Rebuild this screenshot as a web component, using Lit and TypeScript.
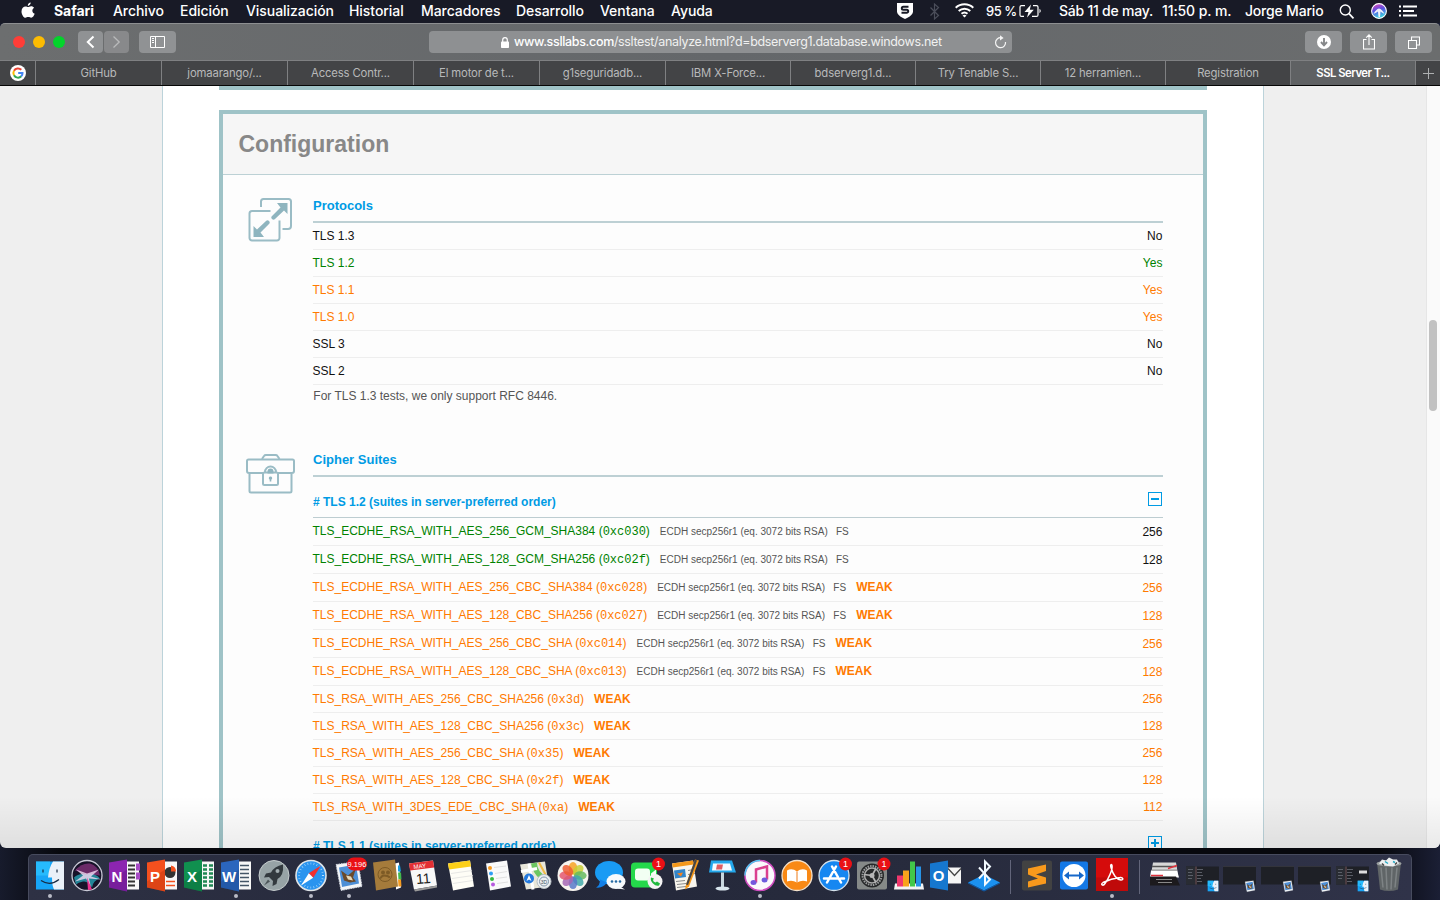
import { LitElement, html, svg, css } from "lit";
import { customElement } from "lit/decorators.js";
import { classMap } from "lit/directives/class-map.js";

type Tone = "plain" | "good" | "warn";

const menus = [
  { label: "Safari", w: 59, cls: "b" },
  { label: "Archivo", w: 67 },
  { label: "Edición", w: 66 },
  { label: "Visualización", w: 103 },
  { label: "Historial", w: 72 },
  { label: "Marcadores", w: 95 },
  { label: "Desarrollo", w: 84 },
  { label: "Ventana", w: 71 },
  { label: "Ayuda", w: 60 },
];

const tabs = [
  { label: "GitHub", w: 126 },
  { label: "jomaarango/...", w: 126 },
  { label: "Access Contr...", w: 126 },
  { label: "El motor de t...", w: 126 },
  { label: "g1seguridadb...", w: 126 },
  { label: "IBM X-Force...", w: 125 },
  { label: "bdserverg1.d...", w: 125 },
  { label: "Try Tenable S...", w: 125 },
  { label: "12 herramien...", w: 125 },
  { label: "Registration", w: 125 },
  { label: "SSL Server T...", w: 125, active: true },
];

const protocols: { name: string; value: string; tone: Tone }[] = [
  { name: "TLS 1.3", value: "No", tone: "plain" },
  { name: "TLS 1.2", value: "Yes", tone: "good" },
  { name: "TLS 1.1", value: "Yes", tone: "warn" },
  { name: "TLS 1.0", value: "Yes", tone: "warn" },
  { name: "SSL 3", value: "No", tone: "plain" },
  { name: "SSL 2", value: "No", tone: "plain" },
];

const suites = [
  { name: "TLS_ECDHE_RSA_WITH_AES_256_GCM_SHA384", code: "0xc030", ecdh: true, weak: false, bits: 256 },
  { name: "TLS_ECDHE_RSA_WITH_AES_128_GCM_SHA256", code: "0xc02f", ecdh: true, weak: false, bits: 128 },
  { name: "TLS_ECDHE_RSA_WITH_AES_256_CBC_SHA384", code: "0xc028", ecdh: true, weak: true, bits: 256 },
  { name: "TLS_ECDHE_RSA_WITH_AES_128_CBC_SHA256", code: "0xc027", ecdh: true, weak: true, bits: 128 },
  { name: "TLS_ECDHE_RSA_WITH_AES_256_CBC_SHA", code: "0xc014", ecdh: true, weak: true, bits: 256 },
  { name: "TLS_ECDHE_RSA_WITH_AES_128_CBC_SHA", code: "0xc013", ecdh: true, weak: true, bits: 128 },
  { name: "TLS_RSA_WITH_AES_256_CBC_SHA256", code: "0x3d", ecdh: false, weak: true, bits: 256 },
  { name: "TLS_RSA_WITH_AES_128_CBC_SHA256", code: "0x3c", ecdh: false, weak: true, bits: 128 },
  { name: "TLS_RSA_WITH_AES_256_CBC_SHA", code: "0x35", ecdh: false, weak: true, bits: 256 },
  { name: "TLS_RSA_WITH_AES_128_CBC_SHA", code: "0x2f", ecdh: false, weak: true, bits: 128 },
  { name: "TLS_RSA_WITH_3DES_EDE_CBC_SHA", code: "0xa", ecdh: false, weak: true, bits: 112 },
];

@customElement("mac-menubar")
class MacMenubar extends LitElement {
  static styles = css`
    :host { display: flex; height: 23px; background: #181a26; color: #fff; font: 500 14px/22px Inter, sans-serif; white-space: nowrap; }
    .apple { width: 33px; padding-left: 21px; }
    .b { font-weight: 700; }
    .item { letter-spacing: -0.06px; }
    .fill { flex: 1; }
    .status { display: flex; width: 543px; }
    svg { display: block; }
    .s { width: 33px; }
    .bt { width: 25px; }
    .wf { width: 31px; }
    .pct { width: 33px; font-size: 13px; letter-spacing: -0.5px; }
    .bat { width: 40px; }
    .date { width: 103px; letter-spacing: -0.23px; }
    .time { width: 83px; letter-spacing: -0.1px; }
    .user { width: 94px; letter-spacing: -0.2px; }
    .find { width: 32px; }
    .siri { width: 28px; }
  `;
  render() {
    return html`
      <div class="apple">
        <svg width="14" height="23" viewBox="0 0 14 23"><path fill="#fff" d="M9.700 2.600c.1 1.700-1.300 3.300-2.900 3.300-.1-1.600 1.300-3.200 2.900-3.300zM7 7c.7 0 1.700-.8 3.100-.8 1.300 0 2.300.6 3 1.500-2.600 1.600-2.200 5 .6 6.100-.6 1.700-2 4-3.500 4-1.100 0-1.500-.7-2.900-.7s-1.900.7-2.900.7C2.700 17.800.5 14.400.5 11.400c0-3.200 2-5 4-5C5.700 6.400 6.500 7 7 7z"/></svg>
      </div>
      ${menus.map((m) => html`<span class=${"item " + (m.cls ?? "")} style=${`width:${m.w}px`}>${m.label}</span>`)}
      <div class="fill"></div>
      <div class="status">
        <svg class="s" width="33" height="23" viewBox="0 0 33 23"><path d="M0 3h16v8.500c0 3-4 6-8 7.500-4-1.500-8-4.500-8-7.500z" fill="#fff"/><path d="M11.500 6.800H6.300a1.400 1.400 0 0 0 0 3h3.400a1.500 1.500 0 0 1 0 3H4.500" fill="none" stroke="#181a26" stroke-width="2"/></svg>
        <svg class="bt" width="25" height="23" viewBox="0 0 25 23"><path d="M.5 7.500l8 8-4 3.500V4l4 3.500-8 8" fill="none" stroke="#4b4e5a" stroke-width="1.200"/></svg>
        <svg class="wf" width="31" height="23" viewBox="0 0 31 23"><g fill="none" stroke="#fff" stroke-width="2"><path d="M.7 7.700a13 13 0 0 1 17.600 0"/><path d="M3.700 10.900a8.600 8.600 0 0 1 11.600 0"/><path d="M6.500 13.800a4.600 4.600 0 0 1 6 0"/></g><path d="M7.500 15.500q2-1.500 4 0l-2 2z" fill="#fff"/></svg>
        <span class="pct">95 %</span>
        <svg class="bat" width="40" height="23" viewBox="0 0 40 23"><g fill="none" stroke="#fff" stroke-width="1.200"><path d="M6 5.600H2.500a1.500 1.500 0 0 0-1.500 1.500v7.800a1.500 1.500 0 0 0 1.500 1.500H5M14 5.600h3.500a1.500 1.500 0 0 1 1.500 1.500v7.800a1.500 1.500 0 0 1-1.500 1.500H13"/></g><path d="M20.500 8.800q2.500 2.200 0 4.400zM12 4.500L5.500 12h4L8 17.500l6.800-7.700h-4z" fill="#fff"/></svg>
        <span class="date">Sáb 11 de may.</span>
        <span class="time">11:50 p. m.</span>
        <span class="user">Jorge Mario</span>
        <svg class="find" width="32" height="23" viewBox="0 0 32 23"><circle cx="6.300" cy="10" r="5" fill="none" stroke="#fff" stroke-width="1.400"/><path d="M10 13.700l4.500 4.600" stroke="#fff" stroke-width="1.700"/></svg>
        <svg class="siri" width="28" height="23" viewBox="0 0 28 23"><defs><linearGradient id="sg" x2=".3" y2="1"><stop offset="0" stop-color="#f03fb0"/><stop offset=".5" stop-color="#5a51e0"/><stop offset="1" stop-color="#3bd0e0"/></linearGradient></defs><circle cx="8" cy="11" r="7.400" fill="url(#sg)" stroke="#fff" stroke-width="1.100"/><path d="M2.500 14Q5 9 8 8.500q3 .5 5.500 5.500Q10 12 9.500 11.500L9 17H7.500l-.5-5.500Q6 12 2.500 14z" fill="#fff" opacity=".9"/></svg>
        <svg width="20" height="23" viewBox="0 0 20 23"><path d="M0 6.500h2M4 6.500h14M0 11h2M4 11h11M0 15.500h2M4 15.500h14" stroke="#fff" stroke-width="2"/></svg>
      </div>
    `;
  }
}

@customElement("safari-chrome")
class SafariChrome extends LitElement {
  static styles = css`
    :host { display: block; font-family: Inter, sans-serif; white-space: nowrap; }
    svg { display: block; }
    .bar { display: flex; align-items: center; box-sizing: border-box; height: 37px; padding: 0 8px 0 13px; border-top: 1px solid #8d8f91; background: linear-gradient(90deg, #6c6e6f, #64676a 50%, #6b6d6e); border-radius: 5px 5px 0 0; }
    .lights { display: flex; gap: 8px; width: 65px; }
    .light { flex: none; width: 12px; height: 12px; border-radius: 50%; background: #ff3d37; }
    .light.amber { background: #fdbc02; }
    .light.green { background: #03d42b; }
    .btn { display: flex; align-items: center; justify-content: center; width: 37px; height: 22px; border-radius: 4px; background: #909294; }
    .nav { width: 25px; margin-right: 1px; }
    .nav.off { margin-right: 10px; background: #88898b; }
    .url { display: flex; align-items: center; box-sizing: border-box; width: 583px; height: 22px; margin-left: 253px; padding: 0 5px 0 72px; border-radius: 4px; background: #8e9092; color: #f0f0f0; font-size: 12.500px; line-height: 22px; letter-spacing: -0.335px; }
    .addr { flex: 1; padding-left: 5px; }
    .host { color: #fff; font-weight: 500; }
    .right { display: flex; gap: 8px; margin-left: auto; }
    .tabs { display: flex; height: 25px; box-sizing: border-box; background: #434446; border-top: 1px solid #7f8082; color: #b8b9ba; font-size: 11.300px; line-height: 24px; }
    .pin { display: flex; align-items: center; justify-content: center; width: 35px; }
    .tab { box-sizing: border-box; border-left: 1px solid #7f8082; text-align: center; letter-spacing: -0.15px; }
    .tab.active { background: #5f6163; color: #fff; font-weight: 600; letter-spacing: -0.5px; }
    .plus { display: flex; flex: 1; align-items: center; justify-content: center; border-left: 1px solid #7f8082; }
    .line { height: 1px; background: #060606; }
  `;
  render() {
    return html`
      <div class="bar">
        <div class="lights"><i class="light"></i><i class="light amber"></i><i class="light green"></i></div>
        <div class="btn nav"><svg width="9" height="14"><path d="M7.500 1.500L1.800 7l5.700 5.500" fill="none" stroke="#fff" stroke-width="2"/></svg></div>
        <div class="btn nav off"><svg width="9" height="14"><path d="M1.500 1.500L7.200 7l-5.700 5.500" fill="none" stroke="#b9babb" stroke-width="1.300"/></svg></div>
        <div class="btn"><svg width="15" height="12"><path d="M.5.5h14v11H.5zM5.500.5v11M2 2.500h2M2 4.500h2M2 6.500h2" fill="none" stroke="#fff"/></svg></div>
        <div class="url">
          <svg width="8" height="11"><rect y="4.500" width="8" height="6.500" rx=".8" fill="#fff"/><path d="M1.700 5V3a2.300 2.300 0 0 1 4.600 0v2" fill="none" stroke="#fff" stroke-width="1.200"/></svg>
          <span class="addr"><span class="host">www.ssllabs.com</span>/ssltest/analyze.html?d=bdserverg1.database.windows.net</span>
          <svg width="13" height="14" viewBox="0 0 13 14"><path d="M7 2.700a5 5 0 1 0 4.500 4.300" fill="none" stroke="#f4f4f4" stroke-width="1.200"/><path d="M6 .3l3.600 2.600L6 5.500z" fill="#f4f4f4"/></svg>
        </div>
        <div class="right">
          <div class="btn"><svg width="14" height="14"><circle cx="7" cy="7" r="7" fill="#fff"/><path d="M7 3v6M4 7l3 3.300L10 7" fill="none" stroke="#858789" stroke-width="1.900"/></svg></div>
          <div class="btn"><svg width="12" height="16"><path d="M3.500 5.500h-3v9.500h11V5.500h-3M6 11V1M3.200 3.700L6 .9l2.800 2.800" fill="none" stroke="#fff" stroke-width="1.100"/></svg></div>
          <div class="btn"><svg width="12" height="13"><path d="M.5 4.500h8v8h-8zM3.500 4.500v-3.500h8v8h-3" fill="none" stroke="#fff" stroke-width="1.100"/></svg></div>
        </div>
      </div>
      <div class="tabs">
        <div class="pin"><svg width="16" height="16" viewBox="0 0 16 16"><circle cx="8" cy="8" r="8" fill="#fff"/><g fill="none" stroke-width="2"><path d="M11.300 4.800A4.600 4.600 0 0 0 4 5.700" stroke="#ea4335"/><path d="M4 5.700a4.600 4.600 0 0 0 0 4.600" stroke="#fbbc05"/><path d="M4 10.300a4.600 4.600 0 0 0 7.300 1" stroke="#34a853"/><path d="M8.200 8h4.300a4.600 4.600 0 0 1-1.300 3.400" stroke="#4285f4"/></g></svg></div>
        ${tabs.map((t) => html`<div class=${classMap({ tab: true, active: !!t.active })} style=${`width:${t.w}px`}>${t.label}</div>`)}
        <div class="plus"><svg width="11" height="11"><path d="M5.500 0v11M0 5.500h11" stroke="#aeb0b1"/></svg></div>
      </div>
      <div class="line"></div>
    `;
  }
}

@customElement("ssl-report")
class SslReport extends LitElement {
  static styles = css`
    :host { display: flex; position: relative; height: 762px; overflow: hidden; background: #efefef; border-radius: 0 0 6px 6px; font: 12px/14px "Liberation Sans", Arial, sans-serif; color: #111; }
    .sheet { box-sizing: border-box; width: 1102px; margin-left: 162px; padding: 0 56px; border: solid #bcd3da; border-width: 0 1px; background: #fff; }
    .prev { height: 4px; background: #9fc3c7; }
    .box { height: 800px; margin-top: 20px; border: 4px solid #9fc3c7; background: #fdfdfd; }
    .title { box-sizing: border-box; height: 61px; padding-left: 15.500px; border-bottom: 1px solid #bcd1d5; background: #f6f6f6; color: #888; font-weight: 700; font-size: 23px; line-height: 60px; }
    .section { display: flex; padding: 0 40px 0 23px; }
    .icon { width: 67px; }
    .protocols { height: 254px; }
    .protocols .icon { padding-top: 22px; }
    .ciphers .icon { padding-top: 24px; }
    .main { flex: 1; }
    svg { display: block; }
    .h { box-sizing: border-box; height: 48px; padding-top: 23px; border-bottom: 2px solid #bdd0d4; color: #009be4; font-weight: 700; font-size: 13px; line-height: 16px; }
    .sub { display: flex; justify-content: space-between; box-sizing: border-box; height: 41px; padding: 15px 1px 0 0; border-bottom: 1px solid #bdcdd1; color: #009be4; font-weight: 700; line-height: 21px; }
    .row { display: flex; justify-content: space-between; box-sizing: border-box; height: 27px; padding: 0 0.600px 0 0; border-bottom: 1px solid #eee; line-height: 26px; white-space: pre; }
    .tall { height: 28px; }
    .tall .bits { padding-top: 1px; }
    .left { margin-left: -0.500px; }
    .good { color: #008200; }
    .warn { color: #ff7a00; }
    .bits.good { color: #111; }
    .code { font-family: "Liberation Mono", monospace; font-size: 12px; }
    .info { margin-left: 10px; color: #555; font-size: 10px; }
    .fs { margin-left: 8.300px; }
    .weak { margin-left: 10px; font-weight: 700; }
    .note { padding: 4px 0 0 0.300px; color: #555; }
    .toggle { box-sizing: border-box; display: flex; align-items: center; justify-content: center; width: 14px; height: 14px; border: 1px solid #009be4; }
    .track { width: 14px; margin-left: auto; box-sizing: border-box; padding: 234px 0 0 2px; border-left: 1px solid #e6e6e6; background: #fafafa; }
    .thumb { width: 8px; height: 91px; border-radius: 4px; background: #c1c1c1; }
    .shade { position: absolute; inset: auto 0 0 0; height: 52px; background: linear-gradient(transparent, rgba(0, 0, 0, 0.065)); }
  `;
  toggle(open: boolean) {
    return html`<span class="toggle"><svg width="8" height="8"><path d=${open ? "M0 4h8" : "M0 4h8M4 0v8"} stroke="#009be4" stroke-width="2"/></svg></span>`;
  }
  render() {
    return html`
      <div class="sheet">
        <div class="prev"></div>
        <div class="box">
          <div class="title">Configuration</div>
          <div class="section protocols">
            <div class="icon">
              <svg width="48" height="46" viewBox="246.500 197 48 46"><g fill="none" stroke="#9abcc5" stroke-width="2"><path d="M261.500 207v-5.500a2.500 2.500 0 0 1 2.500-2.500h25a2.500 2.500 0 0 1 2.500 2.500V226a3 3 0 0 1-3 3H283"/><path d="M271 211h-18.500a2.500 2.500 0 0 0-2.500 2.500V238a2.500 2.500 0 0 0 2.500 2.500h25a2.500 2.500 0 0 0 2.500-2.500v-17.500"/></g><path d="M288 203v11l-3.500-3.500-9 8.500a2 2 0 0 1-3-3l8.500-8.500-3.500-4.500zM254 237v-11l3.500 3.500 9-8.500a2 2 0 0 1 3 3l-8.500 8.500 3.500 4.500z" fill="#8fb5bf"/></svg>
            </div>
            <div class="main">
              <div class="h">Protocols</div>
              ${protocols.map((p) => html`<div class=${"row " + p.tone}><span class="left">${p.name}</span><span>${p.value}</span></div>`)}
              <div class="note">For TLS 1.3 tests, we only support RFC 8446.</div>
            </div>
          </div>
          <div class="section ciphers">
            <div class="icon">
              <svg width="50" height="42" viewBox="246 453 50 42"><g fill="none" stroke="#9abcc5" stroke-width="2"><path d="M262 459l2-3q.6-1 2-1h9.500q1.400 0 2 1l2 3"/><path d="M263 473h-14a2 2 0 0 1-2-2v-10a1.500 1.500 0 0 1 1.500-1.500h44a1.500 1.500 0 0 1 1.500 1.500v10a2 2 0 0 1-2 2h-14M249.500 473v18a1.500 1.500 0 0 0 1.500 1.500h39a1.500 1.500 0 0 0 1.500-1.500v-18"/><path d="M264.500 472.500h12a1.500 1.500 0 0 1 1.500 1.500v9.500a1.500 1.500 0 0 1-1.500 1.500h-12a1.500 1.500 0 0 1-1.500-1.500v-9.500a1.500 1.500 0 0 1 1.500-1.500zM265 473v-1a5.500 5.500 0 0 1 11 0v1"/></g><path d="M267.500 473.500v-2a3 3 0 0 1 6 0v2zM270.500 476.500a1.700 1.700 0 0 1 .8 3.200v1.800h-1.600v-1.800a1.700 1.700 0 0 1 .8-3.200z" fill="#8fb5bf"/></svg>
            </div>
            <div class="main">
              <div class="h">Cipher Suites</div>
              <div class="sub"><span># TLS 1.2 (suites in server-preferred order)</span>${this.toggle(true)}</div>
              ${suites.map((s) => {
                const tone = s.weak ? "warn" : "good";
                return html`<div class=${classMap({ row: true, tall: s.ecdh, [tone]: true })}><span class="left">${s.name} (<span class="code">${s.code}</span>)${s.ecdh ? html`<span class="info">ECDH secp256r1 (eq. 3072 bits RSA)<span class="fs">FS</span></span>` : ""}${s.weak ? html`<span class="weak">WEAK</span>` : ""}</span><span class=${"bits " + tone}>${s.bits}</span></div>`;
              })}
              <div class="sub"><span># TLS 1.1 (suites in server-preferred order)</span>${this.toggle(false)}</div>
            </div>
          </div>
        </div>
      </div>
      <div class="track"><div class="thumb"></div></div>
      <div class="shade"></div>
    `;
  }
}

const officeDoc = (color: string, dark: string, letter: string, page: unknown) => svg`
  <path d="M0-14h15v28H0z" fill="#f7f7f7"/>${page}
  <path d="M-15-13L3-16V16L-15 12z" fill=${color}/><path d="M-15 6L3-6V16L-15 12z" fill=${dark} opacity=".3"/>
  <text x="-7" y="6" text-anchor="middle" font-size="15" font-weight="700" fill="#fff">${letter}</text>`;

const badge = (label: string, x = 11) => svg`
  <rect x=${x - (label.length > 1 ? 10 : 6.5)} y="-18" width=${label.length > 1 ? 20 : 13} height="13" rx="6.5" fill="#ea1015"/>
  <text x=${x} y="-8.500" text-anchor="middle" font-size=${label.length > 1 ? 7.5 : 9} fill="#fff">${label}</text>`;

const stamp = svg`<path d="M-13-11L9-14l4 25-21 4z" fill="#f4f6f8" stroke="#c8ced8" stroke-dasharray="1.500 1"/><path d="M-10-8L7-11l3 19-17 3.500z" fill="#4d8fd6"/><path d="M-8-5l7 5 8-7-3 9 3 4-6 1-6-2z" fill="#6b4a2a"/><path d="M-3 0l5 1 2 4-5-1z" fill="#e8d9b8"/>`;
const finder = svg`<path d="M-14-14H14V14H-14z" fill="#17a5f7"/><path d="M-14-14H0V0H-14z" fill="#2dc4ff" opacity=".7"/><path d="M3-14H14V14H4Q2 10 2 2H-2Q-1-8 3-14z" fill="#eaf1f9"/><path d="M-7-6v3M7-6v3M-9 5Q0 11 9 4" fill="none" stroke="#172a42" stroke-width="1.200"/>`;
const petals = ["#f6a21e", "#c8cf32", "#63b95b", "#3fa9a8", "#5578c8", "#a566b5", "#e5546b", "#ee5c30"];
const thumb = (files: boolean) => svg`<path d="M-16-9H17V9H-16z" fill="#1e2026"/>${files ? svg`<path d="M-16-9h9V9h-9z" fill="#292c33"/><path d="M-14-6h5M-14-3h4M-14 0h5M-14 3h4M-5-6h6M-5-3h5M-5 0h6M-5 3h4M-5 6h5" stroke="#696d77" stroke-width=".8"/><path d="M-6-9V9" stroke="#77575b"/>` : svg`<path d="M-16-9H17" stroke="#33343b"/>`}
  <g transform="translate(11 10.500) scale(.38)">${files ? finder : stamp}</g>`;

const apps: { art: unknown; run?: boolean }[] = [
  { run: true, art: finder },
  { art: svg`<circle r="15" fill="#171329" stroke="#c9c9d6" stroke-width="1.300"/><path d="M-12-5Q-5-13 3-12 11-10 13 0L0-1z" fill="#a43b93" opacity=".6"/><path d="M-13 2Q-8-3 0-1 8-3 13 3 6 5 5 12q-4-7-9-6-5 1-7 3z" fill="#2ab6c8" opacity=".7"/><path d="M0-2L12-6 4 1 14 4 2 3 4 12-1 3-12 6-4 0-11-6z" fill="#f5dbf5" opacity=".8"/><path d="M0 2l5 12-4 .5z" fill="#e9338f"/>` },
  { art: officeDoc("#8c25b0", "#4d0f6e", "N", svg`<path d="M4-10h7M4-6h7M4-2h7M4 2h7M4 6h7M4 10h7" stroke="#333" stroke-width="2"/><path d="M12-12h4v7h-4zM12-3h4v7h-4z" fill="#a64ac5"/>`) },
  { art: officeDoc("#f4501e", "#a82a08", "P", svg`<circle cx="8" cy="-3" r="5.500" fill="#333"/><path d="M9-4v-6a6 6 0 0 1 5 6z" fill="#f4501e"/><path d="M4 6h9M4 10h9" stroke="#f4501e" stroke-width="1.500"/>`) },
  { art: officeDoc("#10904f", "#085a30", "X", svg`<path d="M4-10h4M10-10h4M4-6h4M10-6h4M4-2h4M10-2h4M4 2h4M10 2h4M4 6h4M10 6h4M4 10h4M10 10h4" stroke="#208854" stroke-width="2.500"/>`) },
  { run: true, art: officeDoc("#2b66bd", "#123a7c", "W", svg`<path d="M4-10h9M4-6h9M4-2h9M4 2h9M4 6h9M4 10h9" stroke="#456" stroke-width="1.700"/>`) },
  { art: svg`<circle r="15" fill="#97a3a6" stroke="#c5cccd"/><path d="M9-11Q0-9-3-3l-5 1-2 4 5-.500 4 4-.5 5 4-2 1-5Q10 0 9-11z" fill="#32393e"/><circle cx="3.500" cy="-4.500" r="2" fill="#a2adb0"/><path d="M-6 4l2 2-6 4z" fill="#4c5559"/>` },
  { run: true, art: svg`<circle r="15" fill="#2a94ef" stroke="#dfe4e8" stroke-width="1.600"/><circle r="12" fill="none" stroke="#b8e0ff" stroke-dasharray=".6 2.500" stroke-width="2"/><path d="M10-10L2.200 2.200-2.200-2.200z" fill="#f22f2f"/><path d="M-10 10L2.200 2.200-2.200-2.200z" fill="#fff"/>` },
  { run: true, art: svg`${stamp}${badge("9.196", 8)}` },
  { art: svg`<path d="M9-12l4-1 2 25-5 2z" fill="#fff"/><path d="M12-10h2l1 6h-3z" fill="#1b9fe0"/><path d="M12-3h3l.5 7h-3z" fill="#43b94d"/><path d="M12 4h3l.5 7h-3z" fill="#f59b20"/><path d="M-13-13L9-16l3 27-22 4z" fill="#a57b3b"/><circle cx="-1" cy="-1" r="7" fill="none" stroke="#7e5b26"/><path d="M-6 3q2-3 4-3 4 0 6 2" fill="none" stroke="#7e5b26" stroke-width="2"/><circle cx="-3" cy="-3" r="2" fill="#7e5b26"/><circle cx="2" cy="-3" r="2" fill="#7e5b26"/>` },
  { art: svg`<path d="M-14-12L10-15l4 25-23 4z" fill="#f8f8f8"/><path d="M-14-12L10-15l1.200 7L-13-5z" fill="#e32f33"/><path d="M-9 14l23-4v2l-22 4z" fill="#999"/><text x="-2" y="-7.500" font-size="6" text-anchor="middle" fill="#fff" transform="rotate(-7)">MAY</text><text x="0" y="8" font-size="14" text-anchor="middle" fill="#222" transform="rotate(-5)">11</text>` },
  { art: svg`<path d="M-13-12L9-15l4 26-21 4z" fill="#fefdf6"/><path d="M-13-12L9-15l1 6-22 3z" fill="#fccf18"/><path d="M-10-2L11-5M-9 3L12 0M-8 8l20-3" stroke="#ddd" stroke-width=".7"/>` },
  { art: svg`<path d="M-12-12L9-15l4 26-21 4z" fill="#fafafa"/><circle cx="-8" cy="-7.500" r="2" fill="#f79b22"/><circle cx="-7" cy="-2" r="2" fill="#2c9df4"/><circle cx="-6" cy="3.500" r="2" fill="#35b83f"/><circle cx="-5" cy="9" r="2" fill="#b75adf"/><path d="M-4-8L8-9.500M-3-2L9-4M-2 3l11-1.500M-1 8l11-1.500" stroke="#d5d5d5" stroke-width=".7"/>` },
  { art: svg`<path d="M-15-11L10-14l4 25-23 3z" fill="#e8e6d9"/><path d="M-4-12l6-1q0 10 10 14l.8 6Q-1 3-4-12z" fill="#6cc661"/><path d="M-14-4L2-7M-6-12l4 26" stroke="#fff" stroke-width="3"/><path d="M4-13l7 13" stroke="#f1ba45" stroke-width="2"/><circle cx="-6" cy="3" r="5" fill="#2479dd"/><path d="M-6-.500l2.500 6-2.500-1.500-2.500 1.500z" fill="#fff"/><circle cx="9" cy="6" r="7" fill="#edf0f2" stroke="#b6bec4"/><circle cx="9" cy="6" r="4.500" fill="none" stroke="#8296aa"/><text x="9" y="8" font-size="5" text-anchor="middle" fill="#456">3D</text>` },
  { art: svg`<circle r="15.500" fill="#f7f4ef"/>${petals.map((c, i) => svg`<ellipse cy="-7.300" rx="4.300" ry="6.300" fill=${c} opacity=".83" transform=${`rotate(${i * 45})`}/>`)}` },
  { art: svg`<ellipse cx="-1" cy="-3" rx="14" ry="11.500" fill="#199bf4"/><path d="M-10 4q0 6-4 8 7 1 11-5z" fill="#137fe6"/><ellipse cx="6" cy="6" rx="9.500" ry="7.500" fill="#f7fafc"/><path d="M10 11l5 3-8-1z" fill="#f7fafc"/><g fill="#256ba5"><circle cx="2" cy="6" r="1.300"/><circle cx="6" cy="6" r="1.300"/><circle cx="10" cy="6" r="1.300"/></g>` },
  { art: svg`<rect x="-16" y="-13" width="26" height="25" rx="4" fill="#24d84b"/><rect x="-12" y="-7" width="15" height="12" rx="3" fill="#f2fff3"/><path d="M4-2l5-4V4L4 1z" fill="#f2fff3"/><circle cx="8" cy="6" r="7.500" fill="#f4f4f4"/><path d="M4 2q-1 3 2 6t6 2l1-2-3-2-1.500 1Q6 6 6 4.500L7 3z" fill="#20b83e"/>${badge("1", 11.5)}` },
  { art: svg`<path d="M-13-12L8-15l4 26-21 4z" fill="#f8f5ed"/><path d="M-13-12L8-15l.7 4-21 3z" fill="#f4981b"/><path d="M-11-5L0-6.500l1 8-11 1.500z" fill="#3285c9"/><path d="M-8-2l6-1-2 4z" fill="#f7831c"/><path d="M3-5l6-1M3-1l7-1M-9 6l9-1M-8 9l9-1M-8 12l9-1" stroke="#8b8b8b"/><path d="M10-16l4 1L4 11l-4 3 1-5z" fill="#f7981a"/><path d="M10-16l-9 25 2 .5L12-15z" fill="#474747"/>` },
  { art: svg`<path d="M-11-15H10l4 12H-13z" fill="#24a8ec"/><path d="M-9-12H8l2 7H-10z" fill="#f6fbff"/><path d="M-5-11l6 0-1 5h-6z" fill="#df5d62"/><path d="M-1-3h3V12h-3z" fill="#c8d7df"/><ellipse cx=".5" cy="13" rx="7" ry="2" fill="#d9e6ee"/>` },
  { run: true, art: svg`<circle r="15" fill="#fbf8fc" stroke="#cf4cbf" stroke-width="1.500"/><path d="M-15 0A15 15 0 0 1 0-15" fill="none" stroke="#50c6ee" stroke-width="1.500"/><path d="M-4 7V-6L7-9V4" fill="none" stroke="#db3f8f" stroke-width="2.500"/><ellipse cx="-6.500" cy="7" rx="3" ry="2.500" fill="#7657dd"/><ellipse cx="4.500" cy="4.500" rx="3" ry="2.500" fill="#6e5cdd"/>` },
  { art: svg`<circle r="15" fill="#f98915" stroke="#f5e2cb" stroke-width="1.300"/><path d="M0-4Q-5-8-10-5V6q5-2 10 1 5-3 10-1V-5Q5-8 0-4zV7" fill="#fff"/><path d="M0-4V7" stroke="#ec7a18"/>` },
  { art: svg`<circle r="15" fill="#1687f1" stroke="#d5e2ec" stroke-width="1.300"/><path d="M2-9L-7 7M-2-9L7 7M-10 3H4M7 3h3" stroke="#fff" stroke-width="2.500" stroke-linecap="round"/>${badge("1", 11.5)}` },
  { art: svg`<rect x="-15" y="-14" width="30" height="28" rx="2" fill="#858988"/><circle r="12" fill="#262829"/><circle r="9.500" fill="none" stroke="#9c9e9f" stroke-width="2" stroke-dasharray="1.500 1"/><circle r="7.500" fill="none" stroke="#aaa" stroke-width="1.500"/><path d="M0 0L-8-1M0 0l4-7M0 0l4 7" stroke="#b5b5b5" stroke-width="1.700"/><circle r="2.500" fill="#b5b5b5"/>${badge("1", 12)}` },
  { art: svg`<path d="M-14 8H14l1 6H-15z" fill="#f4f4f4"/><path d="M-12 0h6V11h-6z" fill="#f0376d"/><path d="M-6-5h6V11h-6z" fill="#f9a21c"/><path d="M1-14h5V11h-5z" fill="#42c849"/><path d="M7-9h5V11h-5z" fill="#2794e7"/>` },
  { art: svg`<path d="M1-8h14V8H1z" fill="#f5f5f5"/><path d="M2-7l6.500 7L15-7" fill="none" stroke="#444" stroke-width="1.300"/><path d="M-16-12L2-15V15L-16 12z" fill="#1677ce"/><text x="-7.500" y="5.500" font-size="15" font-weight="700" text-anchor="middle" fill="#fff">O</text>` },
  { art: svg`<path d="M0-1L16 7 0 15-16 7z" fill="#1b91ef"/><path d="M-16 7L0 15 16 7v1L0 16-16 8z" fill="#0d5daf"/><path d="M-5-8L6 4 1 9V-14l5 5L-5 3" fill="none" stroke="#f2faff" stroke-width="2"/>` },
];

const pinned: { art: unknown; run?: boolean }[] = [
  { art: svg`<rect x="-15" y="-15" width="30" height="30" rx="2" fill="#424242"/><path d="M9-11v6.500L-1-1 9 2v6L-9 12V6L1 3-9-1v-6z" fill="#f99a1c"/>` },
  { art: svg`<rect x="-14" y="-14" width="28" height="28" rx="2" fill="#1478e6"/><circle r="11.500" fill="#fff"/><path d="M-10 0l5-4v3H5v-3l5 4-5 4V1H-5v3z" fill="#1768c9"/>` },
  { run: true, art: svg`<path d="M-16-17.500H16V15.500H-16z" fill="#d50b0b"/><path d="M-16 2H16V15.500H-16z" fill="#a90909" opacity=".5"/><path d="M-9 7c-3 2 0 4 2 1C-4 4 1-6 0-10c-.5-2-2-1-1 2C1-1 5 4 9 4.500c3 0 2-3-1-2.500-5 .5-11 2-17 5" fill="none" stroke="#fff" stroke-width="1.500"/>` },
];

const files: unknown[] = [
  svg`<path d="M-11-13H12l2 12h-27z" fill="#d8d8d8"/><path d="M-12-9H12M-13-5H13" stroke="#555" stroke-width="1.500"/><path d="M-13-5H13l2 7h-29z" fill="#fff"/><path d="M-14 1h26l4 9h-30z" fill="#1c1a1d"/><path d="M-13 0h12M4-7l9-3" stroke="#e0313c" stroke-width="1.500"/><path d="M-8 4H8M-6 7H8" stroke="#888"/>`,
  thumb(true),
  thumb(false),
  thumb(false),
  thumb(false),
  svg`${thumb(true)}<path d="M7-5h8v3H7z" fill="#ddd"/>`,
  svg`<path d="M-12-13L-9 14q9 3 18 0L12-13z" fill="#606567"/><path d="M-8-8l2 20M-3-8l1 22M3-8L2 14M8-8L6 12" stroke="#7e8385" stroke-width="1.500"/><ellipse cy="-12" rx="12.500" ry="3" fill="#9ba0a1"/><path d="M-10-12l3-4 4 1 3-3 4 2 4 0 2 4-6 3-9-1z" fill="#eceff0"/><path d="M-4-14l3 2M4-14l2 1" stroke="#28a9c3" stroke-width="1.500"/><path d="M-7-12l2 2M6-11l2-2" stroke="#444" stroke-width="1.500"/>`,
];

@customElement("mac-dock")
class MacDock extends LitElement {
  static styles = css`
    :host { display: flex; box-sizing: border-box; height: 52px; padding: 6px 28px 0; font-family: "Liberation Sans", Arial, sans-serif; }
    .shelf { display: flex; box-sizing: border-box; width: 1384px; height: 46px; padding: 2px 0 0 2px; border: 1px solid #474b5e; border-bottom: 0; border-radius: 5px 5px 0 0; background: linear-gradient(90deg, #2e3144, #24283a 35%, #272b3d 65%, #303349); }
    .group { display: flex; }
    .slot { display: flex; flex-direction: column; align-items: center; width: 37.360px; }
    .files .slot { width: 37.500px; }
    .art { display: block; width: 36px; height: 37px; overflow: visible; }
    .dot { width: 4px; height: 4px; border-radius: 50%; background: #b9bbc6; }
    .sep { width: 1px; height: 34px; margin: 3px 7px 0 8px; background: #62657a; }
    .sep.tall { margin: 3px 5px 0 9px; }
  `;
  slotFor(art: unknown, run?: boolean) {
    return html`<div class="slot"><svg class="art" viewBox="-18 -18.500 36 37">${art}</svg>${run ? html`<i class="dot"></i>` : ""}</div>`;
  }
  render() {
    return html`
      <div class="shelf">
        <div class="group">${apps.map((a) => this.slotFor(a.art, a.run))}</div>
        <div class="sep"></div>
        <div class="group">${pinned.map((a) => this.slotFor(a.art, a.run))}</div>
        <div class="sep tall"></div>
        <div class="group files">${files.map((f) => this.slotFor(f))}</div>
      </div>
    `;
  }
}

@customElement("app-root")
class AppRoot extends LitElement {
  static styles = css`
    :host { display: flex; flex-direction: column; width: 1440px; height: 900px; overflow: hidden; background: linear-gradient(90deg, #171b2c, #07080d 60px, #07080d 1380px, #1b1f35); }
  `;
  render() {
    return html`<mac-menubar></mac-menubar><safari-chrome></safari-chrome><ssl-report></ssl-report><mac-dock></mac-dock>`;
  }
}
